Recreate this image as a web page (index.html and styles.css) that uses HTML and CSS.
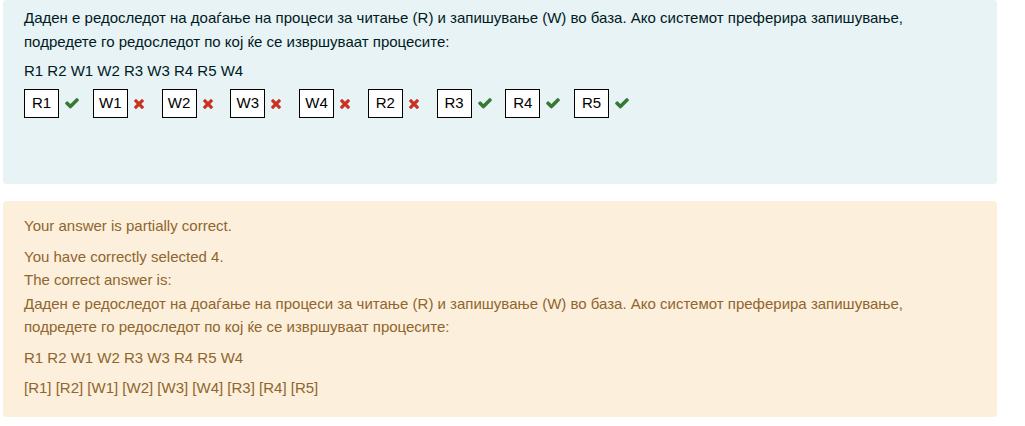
FILE: index.html
```html
<!DOCTYPE html>
<html>
<head>
<meta charset="utf-8">
<link rel="stylesheet" href="styles.css">
</head>
<body>
<div class="que">
  <div class="formulation">
    <p class="qtext">Даден е редоследот на доаѓање на процеси за читање (R) и запишување (W) во база. Ако системот преферира запишување, подредете го редоследот по кој ќе се извршуваат процесите:</p>
    <p>R1 R2 W1 W2 R3 W3 R4 R5 W4</p>
    <div class="drops">
      <span class="item"><span class="box">R1</span><svg class="ok" viewBox="0 0 1792 1792"><path d="M1671 566q0 40-28 68l-724 724-136 136q-28 28-68 28t-68-28l-136-136-362-362q-28-28-28-68t28-68l136-136q28-28 68-28t68 28l294 295 656-657q28-28 68-28t68 28l136 136q28 28 28 68z"/></svg></span>
      <span class="item"><span class="box">W1</span><svg class="bad" viewBox="0 0 1408 1792"><path d="M1298 1322q0 40-28 68l-136 136q-28 28-68 28t-68-28l-294-294-294 294q-28 28-68 28t-68-28l-136-136q-28-28-28-68t28-68l294-294-294-294q-28-28-28-68t28-68l136-136q28-28 68-28t68 28l294 294 294-294q28-28 68-28t68 28l136 136q28 28 28 68t-28 68l-294 294 294 294q28 28 28 68z"/></svg></span>
      <span class="item"><span class="box">W2</span><svg class="bad" viewBox="0 0 1408 1792"><path d="M1298 1322q0 40-28 68l-136 136q-28 28-68 28t-68-28l-294-294-294 294q-28 28-68 28t-68-28l-136-136q-28-28-28-68t28-68l294-294-294-294q-28-28-28-68t28-68l136-136q28-28 68-28t68 28l294 294 294-294q28-28 68-28t68 28l136 136q28 28 28 68t-28 68l-294 294 294 294q28 28 28 68z"/></svg></span>
      <span class="item"><span class="box">W3</span><svg class="bad" viewBox="0 0 1408 1792"><path d="M1298 1322q0 40-28 68l-136 136q-28 28-68 28t-68-28l-294-294-294 294q-28 28-68 28t-68-28l-136-136q-28-28-28-68t28-68l294-294-294-294q-28-28-28-68t28-68l136-136q28-28 68-28t68 28l294 294 294-294q28-28 68-28t68 28l136 136q28 28 28 68t-28 68l-294 294 294 294q28 28 28 68z"/></svg></span>
      <span class="item"><span class="box">W4</span><svg class="bad" viewBox="0 0 1408 1792"><path d="M1298 1322q0 40-28 68l-136 136q-28 28-68 28t-68-28l-294-294-294 294q-28 28-68 28t-68-28l-136-136q-28-28-28-68t28-68l294-294-294-294q-28-28-28-68t28-68l136-136q28-28 68-28t68 28l294 294 294-294q28-28 68-28t68 28l136 136q28 28 28 68t-28 68l-294 294 294 294q28 28 28 68z"/></svg></span>
      <span class="item"><span class="box">R2</span><svg class="bad" viewBox="0 0 1408 1792"><path d="M1298 1322q0 40-28 68l-136 136q-28 28-68 28t-68-28l-294-294-294 294q-28 28-68 28t-68-28l-136-136q-28-28-28-68t28-68l294-294-294-294q-28-28-28-68t28-68l136-136q28-28 68-28t68 28l294 294 294-294q28-28 68-28t68 28l136 136q28 28 28 68t-28 68l-294 294 294 294q28 28 28 68z"/></svg></span>
      <span class="item"><span class="box">R3</span><svg class="ok" viewBox="0 0 1792 1792"><path d="M1671 566q0 40-28 68l-724 724-136 136q-28 28-68 28t-68-28l-136-136-362-362q-28-28-28-68t28-68l136-136q28-28 68-28t68 28l294 295 656-657q28-28 68-28t68 28l136 136q28 28 28 68z"/></svg></span>
      <span class="item"><span class="box">R4</span><svg class="ok" viewBox="0 0 1792 1792"><path d="M1671 566q0 40-28 68l-724 724-136 136q-28 28-68 28t-68-28l-136-136-362-362q-28-28-28-68t28-68l136-136q28-28 68-28t68 28l294 295 656-657q28-28 68-28t68 28l136 136q28 28 28 68z"/></svg></span>
      <span class="item"><span class="box">R5</span><svg class="ok" viewBox="0 0 1792 1792"><path d="M1671 566q0 40-28 68l-724 724-136 136q-28 28-68 28t-68-28l-136-136-362-362q-28-28-28-68t28-68l136-136q28-28 68-28t68 28l294 295 656-657q28-28 68-28t68 28l136 136q28 28 28 68z"/></svg></span>
    </div>
  </div>
  <div class="outcome">
    <p>Your answer is partially correct.</p>
    <p class="lines">You have correctly selected 4.<br>The correct answer is:<br>Даден е редоследот на доаѓање на процеси за читање (R) и запишување (W) во база. Ако системот преферира запишување, подредете го редоследот по кој ќе се извршуваат процесите:</p>
    <p>R1 R2 W1 W2 R3 W3 R4 R5 W4</p>
    <p class="last">[R1] [R2] [W1] [W2] [W3] [W4] [R3] [R4] [R5]</p>
  </div>
</div>
</body>
</html>
```

FILE: styles.css
```css
html, body {
  margin: 0;
  padding: 0;
  background: #ffffff;
}
body {
  font-family: "Liberation Sans", Arial, sans-serif;
  font-size: 15px;
  line-height: 23.5px;
}
.que {
  width: 994px;
  margin-left: 3px;
  display: flex;
  flex-direction: column;
  gap: 17px;
}
p {
  margin: 0 0 6px 0;
}
.formulation {
  background: #e7f3f5;
  color: #001a1e;
  border-radius: 4px;
  padding: 6px 21px 0 21px;
  height: 178px;
}
.qtext {
  width: 900px;
}
.drops {
  display: flex;
  align-items: center;
  gap: 12.75px;
  margin-top: 0;
}
.item {
  display: flex;
  align-items: center;
  gap: 5px;
}
.box {
  display: inline-flex;
  align-items: center;
  justify-content: center;
  width: 33px;
  height: 27px;
  border: 1px solid #000;
  background: #fff;
  color: #000;
}
.ok {
  width: 16px;
  height: 16px;
  fill: #357a32;
}
.bad {
  width: 12px;
  height: 15px;
  fill: #ca3120;
  margin-right: 4px;
}
.outcome {
  background: #fcefdc;
  color: #8e662e;
  border-radius: 4px;
  padding: 13px 21px 17px 21px;
}
.outcome p {
  margin-bottom: 7px;
}
.outcome .lines {
  width: 900px;
}
.outcome .last {
  margin-bottom: 0;
}
```
